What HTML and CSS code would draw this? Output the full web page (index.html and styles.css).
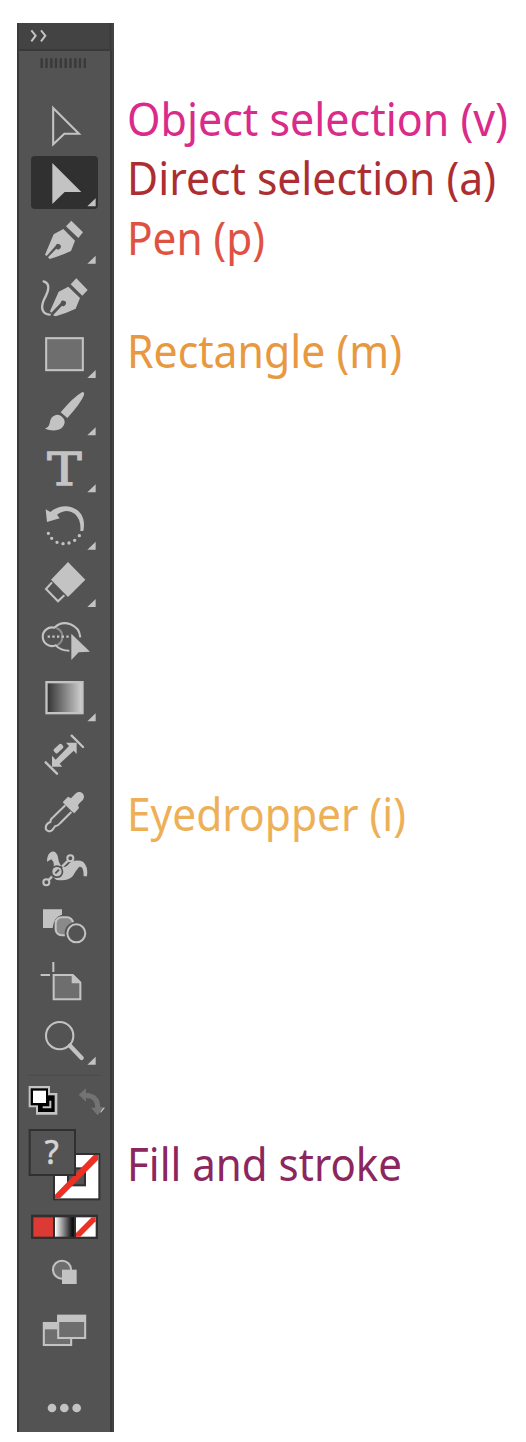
FILE: index.html
```html
<!DOCTYPE html>
<html lang="en">
<head>
<meta charset="utf-8">
<title>Toolbar shortcuts</title>
<link rel="stylesheet" href="styles.css">
</head>
<body>
<main class="sheet">
  <aside class="toolbar">
    <svg class="header" viewBox="21 24 291 84"><rect class="header-bg" x="21" y="24" width="291" height="84"/><rect class="edge" x="21" y="24" width="5" height="84"/><rect class="edge" x="26" y="102" width="275" height="6"/><rect class="edge" x="299" y="24" width="5" height="84"/><path class="line chevron" d="M64 46L77 62L64 79M93 46L106 62L93 79"/></svg>
    <svg class="grip" viewBox="21 108 291 141"><path class="grip-lines" d="M95 130V159M109.500 130V159M124 130V159M138 130V159M152.500 130V159M167 130V159M181.500 130V159M196 130V159M210 130V159M224.500 130V159"/></svg>
    <svg class="tool" viewBox="21 249 291 171"><path class="line" d="M129.500 279V388L163 356H207Z"/></svg>
    <svg class="tool" viewBox="21 15 291 171"><rect class="selected" x="63" y="18" width="201" height="159" rx="12"/><path class="solid" d="M127 39V162L164 126H214ZM257 145V169H232Z"/></svg>
    <svg class="tool" viewBox="21 186 291 171"><path class="solid" d="M184 212L219 247L205 264L168 229ZM160 237L195 272L183 303Q150 318 119 327L114 322L139 296A8 8 0 1 0 137 287L110 318L105 314L131 253ZM257 317V341H232Z"/></svg>
    <svg class="tool" viewBox="21 -3 291 171"><path class="solid" d="M199 25L233 60L217 77L182 43ZM175 50L210 84L197 116Q165 131 137 139L129 136L156 107A8 8 0 1 0 152 99L124 128L120 124L146 65Z"/><path class="line thick" d="M101 34C126 42 112 70 101 91C91 115 98 133 119 134"/></svg>
    <svg class="tool" viewBox="21 168 291 171"><rect class="line filled" x="108.500" y="204.500" width="110" height="96"/><path class="solid" d="M257 300V324H232Z"/></svg>
    <svg class="tool" viewBox="21 -6 291 171"><path class="solid" d="M217 21Q224 21 222 30Q213 54 172 99L152 82Q189 37 217 21ZM138 90Q148 88 156 95Q167 105 163 117Q158 133 138 136Q120 138 105 131Q116 128 119 115Q122 93 138 90ZM257 127V151H232Z"/></svg>
    <svg class="tool" viewBox="21 165 291 171"><text class="type" x="112" y="299" textLength="103" lengthAdjust="spacingAndGlyphs">T</text><path class="solid" d="M257 298V322H232Z"/></svg>
    <svg class="tool" viewBox="21 -9 291 171"><path class="solid" d="M107 28L121 36C152 8 195 16 213 42Q226 62 220 93H211Q214 58 194 41Q170 24 141 44L149 55L111 66ZM257 125V149H232Z"/><path class="dots" d="M115 100h.1M125 115h.1M141 127h.1M159 131h.1M177 129h.1M194 121h.1M208 107h.1"/></svg>
    <svg class="tool" viewBox="21 162 291 171"><path class="solid" d="M174 186L226 239L174 291L123 239ZM257 297V321H232Z"/><path class="line" d="M126 247L108 267L144 304L163 286"/></svg>
    <svg class="tool" viewBox="21 -12 291 171"><path class="overlap" d="M139 39A28 28 0 0 1 140 91"/><path class="line" d="M211 67A46 46 0 0 0 133 38A28 28 0 1 0 137 91Q152 107 178 107"/><path class="dash" d="M113 65H184"/><path class="solid" d="M184 56V135L206 112L240 110Z"/></svg>
    <svg class="tool" viewBox="21 159 291 171"><defs><linearGradient id="ramp"><stop stop-color="#303030"/><stop offset="1" stop-color="#d2d2d2"/></linearGradient></defs><rect x="109.500" y="201.500" width="108" height="93" fill="url(#ramp)" stroke="#c3c3c3" stroke-width="7"/><path class="solid" d="M257 295V319H232Z"/></svg>
    <svg class="tool" viewBox="21 -15 291 171"><path class="line thick" d="M185 17L219 51M107 97L141 131"/><path class="solid" d="M168 38H200V72L191 62L149 101L157 110H126V77L137 89L177 48Z"/><rect class="solid" x="130" y="48" width="31" height="16" rx="5" transform="rotate(-42 145 56)"/></svg>
    <svg class="tool" viewBox="21 156 291 171"><path class="solid" d="M196 191C207 180 223 188 222 202Q221 210 212 216L204 225L207 234L193 250L185 244L158 217L174 200L183 205Z"/><path class="line" d="M166 226L130 261Q121 267 121 276C104 283 103 301 117 304C127 305 130 295 135 289Q145 287 151 279L184 246"/></svg>
    <svg class="tool" viewBox="21 -18 291 171"><path class="solid" d="M111 50C111 13 142 9 145 43C149 64 161 72 173 61C183 46 204 44 219 50Q235 63 231 94H221Q221 62 207 66Q197 78 188 94Q171 111 138 104L125 91Q139 55 124 43Z"/><path class="gap-line" d="M152 68L172 48"/><circle class="gap" cx="141" cy="80" r="19"/><path class="line node" d="M115 106L126 95M156 65L175 46"/><circle class="solid" cx="141" cy="80" r="14"/><path class="slit" d="M136 85L147 74"/><circle class="line hollow" cx="109" cy="112" r="9"/><circle class="line hollow" cx="181" cy="40" r="9"/></svg>
    <svg class="tool" viewBox="21 153 291 171"><path class="solid" d="M99 193H156V209Q132 214 128 249H99Z"/><rect class="line mid" x="137" y="217" width="52" height="54" rx="18"/><circle class="gap-line" cx="199" cy="265" r="31"/><circle class="line hollow blend" cx="199" cy="265" r="27"/></svg>
    <svg class="tool" viewBox="21 9 291 171"><path class="line filled" d="M131 75H188L211 98V148H131Z"/><path class="line" d="M130 36V66M92 75H120"/><path class="solid" d="M185 74H191L212 95V100H185Z"/></svg>
    <svg class="tool" viewBox="21 180 291 171"><circle class="line" cx="149" cy="257" r="41"/><path class="handle" d="M180 287L215 324"/><path class="solid" d="M257 320V344H232Z"/></svg>
    <svg class="colors" viewBox="21 6 291 429">
      <path class="divider" d="M56 31H272"/>
      <path class="solid" d="M56 63H120V84H142V149H78V127H56Z"/><rect x="84" y="91" width="50" height="50"/><rect x="62" y="70" width="52" height="51"/><rect x="69" y="77" width="39" height="37" fill="#fff"/><path d="M121 107V127H98" fill="none" stroke="#c3c3c3" stroke-width="6"/>
      <path class="solid" d="M269 128H285L272 144Z"/><path class="swap" d="M206 89L228 70V84Q271 86 271 128H280L263 151L243 128H256Q257 99 228 99V110Z"/>
      <rect class="box" x="132" y="267" width="136" height="136" fill="#fff"/><rect class="box" x="174" y="310" width="51" height="51" fill="#535353"/><path d="M135 389V400H150L264 285V270H251Z" fill="#ed3024"/>
      <rect class="box" x="59" y="195" width="136" height="135" fill="#535353"/><text class="unknown" x="104" y="298">?</text>
    </svg>
    <svg class="modes" viewBox="21 15 291 105"><defs><linearGradient id="fade"><stop stop-color="#fff"/><stop offset=".9" stop-color="#111"/></linearGradient></defs><rect x="63" y="29" width="201" height="73" fill="#303030"/><rect x="70" y="37" width="59" height="58" fill="#dc3a35"/><rect x="135" y="37" width="57" height="58" fill="url(#fade)"/><rect x="198" y="37" width="59" height="58" fill="#fff"/><path d="M198 84V95H211L257 49V37H245Z" fill="#ed3024"/></svg>
    <svg class="tool" viewBox="21 120 291 171"><circle class="line filled" cx="156" cy="194" r="27"/><rect class="solid" x="156" y="194" width="44" height="43"/></svg>
    <svg class="screens" viewBox="21 291 291 219"><rect class="line filled" x="101.500" y="354" width="82" height="66"/><path class="solid" d="M99 352H143V373H99Z"/><rect class="line filled" x="144.500" y="332" width="81" height="67"/><path class="solid" d="M142 330H228V351H142Z"/></svg>
    <svg class="tool" viewBox="21 510 291 171"><circle class="solid" cx="126" cy="609" r="13"/><circle class="solid" cx="163" cy="609" r="13"/><circle class="solid" cx="200" cy="609" r="13"/></svg>
  </aside>
  <section class="labels">
    <svg class="label object"><text x="3" y="55.500" textLength="381" lengthAdjust="spacingAndGlyphs">Object selection (v)</text></svg>
    <svg class="label direct"><text x="3" y="55" textLength="369" lengthAdjust="spacingAndGlyphs">Direct selection (a)</text></svg>
    <svg class="label pen"><text x="3" y="55" textLength="138" lengthAdjust="spacingAndGlyphs">Pen (p)</text></svg>
    <svg class="label rectangle"><text x="3" y="55" textLength="275" lengthAdjust="spacingAndGlyphs">Rectangle (m)</text></svg>
    <svg class="label eyedropper"><text x="3" y="55" textLength="279" lengthAdjust="spacingAndGlyphs">Eyedropper (i)</text></svg>
    <svg class="label fill-stroke"><text x="3" y="55" textLength="275" lengthAdjust="spacingAndGlyphs">Fill and stroke</text></svg>
  </section>
</main>
</body>
</html>
```
FILE: styles.css
```css
body { margin: 0; background: #fff; }
.sheet { display: flex; gap: 10px; height: 1442px; padding: 23px 0 10px 17px; box-sizing: border-box; }
.toolbar {
  display: flex; flex-direction: column; width: 97px; height: 1409px;
  background: linear-gradient(to right, #3a3a3a 0 1.6px, #535353 1.6px 93px, #393939 93px 94.500px, #424242 94.500px);
}
svg { display: block; width: 97px; flex: none; }
.header { height: 28px; }
.grip { height: 47px; }
.tool { height: 57px; }
.colors { height: 143px; }
.modes { height: 35px; }
.screens { height: 73px; }
.header-bg { fill: #434343; }
.edge { fill: #393939; }
.grip-lines { stroke: #393939; stroke-width: 7; }
.solid { fill: #c3c3c3; }
.line { fill: none; stroke: #c3c3c3; stroke-width: 6.200; }
.chevron { stroke-width: 6; }
.thick { stroke-width: 7; stroke-linecap: round; }
.filled { fill: #6e6e6e; }
.mid { fill: #8a8a8a; }
.selected { fill: #303030; }
.dots { stroke: #c3c3c3; stroke-width: 10; stroke-linecap: round; }
.dash { stroke: #c3c3c3; stroke-width: 7; stroke-dasharray: 7 7; }
.overlap { fill: none; stroke: #8c8c8c; stroke-width: 6; }
.gap { fill: #535353; }
.slit { stroke: #535353; stroke-width: 6; }
.node { stroke-width: 7; }
.hollow { fill: #535353; }
.gap-line { fill: #535353; stroke: #535353; stroke-width: 8; }
.blend { stroke-width: 6; }
.handle { fill: none; stroke: #c3c3c3; stroke-width: 13; stroke-linecap: round; }
.divider { stroke: #4b4b4b; stroke-width: 4; }
.swap { fill: #737373; }
.box { stroke: #303030; stroke-width: 6; }
.type { font: 132px "DejaVu Serif", serif; fill: #c3c3c3; stroke: #c3c3c3; stroke-width: 4; }
.unknown { font: 96px "Noto Sans", sans-serif; fill: #d4d4d4; stroke: #d4d4d4; stroke-width: 2; }
.labels { display: flex; flex-direction: column; width: 399px; padding-top: 57px; box-sizing: border-box; }
.label { width: 399px; height: 60px; overflow: visible; font: 45px "Noto Sans", sans-serif; }
.object { fill: #da2b8b; }
.direct { fill: #ad2e32; }
.pen { fill: #df5242; height: 113px; }
.rectangle { fill: #e8983f; height: 463px; }
.eyedropper { fill: #edb057; height: 350px; }
.fill-stroke { fill: #8b265f; height: 80px; }
```
